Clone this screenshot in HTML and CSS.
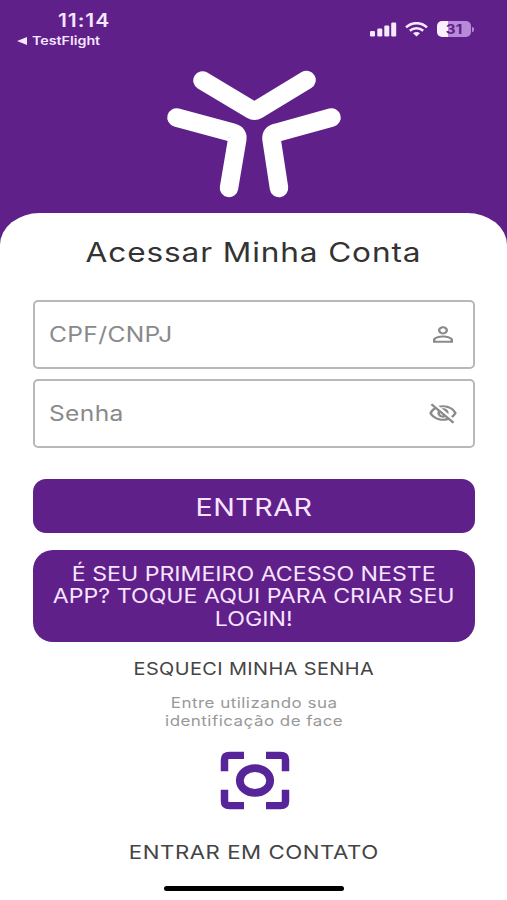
FILE: index.html
```html
<!DOCTYPE html>
<html lang="pt-BR">
<head>
    <meta charset="UTF-8">
    <meta name="viewport" content="width=device-width, initial-scale=1.0">
    <title>Acessar Minha Conta</title>
    <link rel="stylesheet" href="styles.css">
</head>
<body>
    <header class="header">
        <div class="status-bar">
            <div class="status-left">
                <div class="time"><span class="wide">11:14</span></div>
                <div class="back">
                    <svg width="10" height="8" viewBox="0 0 10 8"><path d="M0 4 10 0v8z" fill="#f6e6ff"/></svg>
                    <span class="wide">TestFlight</span>
                </div>
            </div>
            <div class="status-right">
                <svg class="signal" width="27" height="15" viewBox="0 0 27 15" fill="#f6e9ff">
                    <rect x="0" y="9" width="5" height="5.500" rx="1.200"/>
                    <rect x="7.300" y="6.500" width="5" height="8" rx="1.200"/>
                    <rect x="14.300" y="3.500" width="5" height="11" rx="1.200"/>
                    <rect x="21.200" y="0.500" width="5" height="14" rx="1.200"/>
                </svg>
                <svg class="wifi" width="23" height="15" viewBox="0 0 23 15" fill="none" stroke="#f6e9ff" stroke-width="2.500">
                    <path d="M1 5.300C7-.2 16-.2 22 5.300"/>
                    <path d="M4.800 8.800c4-3.500 9.400-3.500 13.400 0"/>
                    <path d="M8 11.200c2-1.600 5-1.600 7 0L11.500 14.500z" fill="#f6e9ff" stroke="none"/>
                </svg>
                <div class="battery"><span class="wide">31</span></div>
                <div class="battery-tip"></div>
            </div>
        </div>
        <svg class="logo" width="210" height="150" viewBox="0 0 210 150" fill="none" stroke="#fff" stroke-width="18.500" stroke-linecap="round" stroke-linejoin="round">
            <path d="M52.500 20.500 101.500 49.800Q104.500 51.600 107.500 49.800L156.500 20"/>
            <path d="M26.500 57.500 83 72.800Q88 74 87.300 79L79 128"/>
            <path d="M181.500 57.500 126 72.800Q121 74 121.500 79L129 128"/>
        </svg>
    </header>

    <main class="sheet">
        <h1 class="title"><span class="wide">Acessar Minha Conta</span></h1>

        <div class="field">
            <span class="wide">CPF/CNPJ</span>
            <svg width="30" height="25" viewBox="0 0 24 24" preserveAspectRatio="none" fill="#8a8a8a">
                <path d="M12 5.900c1.160 0 2.100.94 2.100 2.100s-.94 2.100-2.100 2.100S9.900 9.160 9.900 8s.94-2.100 2.100-2.100m0 9c2.970 0 6.100 1.460 6.100 2.100v1.100H5.900V17c0-.64 3.130-2.100 6.100-2.100M12 4C9.790 4 8 5.790 8 8s1.790 4 4 4 4-1.790 4-4-1.790-4-4-4zm0 9c-2.670 0-8 1.340-8 4v3h16v-3c0-2.660-5.330-4-8-4z"/>
            </svg>
        </div>
        <div class="field">
            <span class="wide">Senha</span>
            <svg width="30" height="25" viewBox="0 0 24 24" preserveAspectRatio="none" fill="#8a8a8a">
                <path d="M12 6c3.790 0 7.170 2.130 8.820 5.500-.59 1.220-1.420 2.270-2.410 3.120l1.410 1.410c1.390-1.230 2.490-2.770 3.180-4.530C21.270 7.110 17 4 12 4c-1.270 0-2.490.2-3.640.57l1.650 1.650C10.660 6.090 11.320 6 12 6zm-1.070 1.140L13 9.210c.57.25 1.030.71 1.280 1.280l2.070 2.070c.08-.34.14-.7.14-1.070C16.500 9.010 14.480 7 12 7c-.37 0-.72.05-1.070.14zM2.010 3.870l2.680 2.680C3.060 7.830 1.770 9.530 1 11.500 2.730 15.890 7 19 12 19c1.520 0 2.980-.29 4.320-.82l3.420 3.420 1.410-1.410L3.420 2.450 2.010 3.870zm7.500 7.500 2.610 2.610c-.04.01-.08.02-.12.02-1.380 0-2.500-1.120-2.500-2.500 0-.05.01-.08.01-.13zm-3.400-3.400 1.750 1.750c-.23.55-.36 1.150-.36 1.780 0 2.480 2.020 4.500 4.500 4.500.63 0 1.230-.13 1.770-.36l.98.98c-.88.24-1.800.38-2.750.38-3.790 0-7.170-2.130-8.820-5.500.7-1.430 1.720-2.610 2.930-3.530z"/>
            </svg>
        </div>

        <button class="button enter"><span class="wide">ENTRAR</span></button>
        <button class="button first-access">
            <span class="wide">É SEU PRIMEIRO ACESSO NESTE<br>APP? TOQUE AQUI PARA CRIAR SEU<br>LOGIN!</span>
        </button>

        <a class="forgot"><span class="wide">ESQUECI MINHA SENHA</span></a>
        <p class="face-text"><span class="wide">Entre utilizando sua<br>identificação de face</span></p>
        <svg class="face-icon" width="70" height="59" viewBox="0 0 70 60" preserveAspectRatio="none" fill="none" stroke="#58249a" stroke-width="7.500">
            <path d="M4.500 20.500V9Q4.500 4.500 9.500 4.500H24" />
            <path d="M46 4.500H60.500Q65.500 4.500 65.500 9V20.500"/>
            <path d="M65.500 39.500V51Q65.500 55.500 60.500 55.500H46"/>
            <path d="M24 55.500H9.500Q4.500 55.500 4.500 51V39.500"/>
            <ellipse cx="35" cy="30" rx="15.200" ry="12.600" stroke-width="7.800"/>
        </svg>
        <a class="contact"><span class="wide">ENTRAR EM CONTATO</span></a>
        <div class="home-indicator"></div>
    </main>
</body>
</html>
```
FILE: styles.css
```css
* {
    box-sizing: border-box;
}

body {
    margin: 0;
    height: 900px;
    background: #5f208a;
    font-family: Inter, "Liberation Sans", sans-serif;
    display: flex;
    flex-direction: column;
    overflow: hidden;
}

/* extended letterforms */
.wide {
    display: inline-block;
    white-space: nowrap;
    transform: scaleX(1.17);
}

.header {
    flex-shrink: 0;
    height: 213px;
}

.status-bar {
    display: flex;
    justify-content: space-between;
    height: 60px;
    padding: 10px 33px 0 17px;
    color: #f6e6ff;
}

.time {
    font-size: 18px;
    font-weight: 600;
    line-height: 21px;
    letter-spacing: 0.8px;
    padding-left: 41px;
}

.time .wide,
.back .wide,
.field .wide {
    transform-origin: left center;
}

.back {
    display: flex;
    align-items: center;
    gap: 5px;
    font-size: 12.2px;
    font-weight: 600;
    line-height: 19px;
}

.status-right {
    display: flex;
    align-items: center;
    height: 38px;
}

.wifi {
    margin: 0 9px 0 8px;
}

.battery {
    width: 34px;
    height: 16px;
    border-radius: 5px;
    background: linear-gradient(90deg, #faf0ff 31%, #b98ad8 31%);
    color: #5f208a;
    font-size: 13px;
    font-weight: 700;
    line-height: 16px;
    text-align: center;
}

.battery-tip {
    width: 2px;
    height: 5px;
    margin-left: 1px;
    border-radius: 0 2px 2px 0;
    background: #b98ad8;
}

.logo {
    display: block;
    margin-left: 150px;
}

.sheet {
    flex: 1;
    display: flex;
    flex-direction: column;
    align-items: center;
    padding: 20px 32px 0 33px;
    background: #fff;
    border-radius: 40px 40px 0 0 / 32px 32px 0 0;
}

.title {
    margin: 0 0 27px;
    font-size: 27px;
    font-weight: 400;
    line-height: 40px;
    letter-spacing: 0.75px;
    color: #333;
}

.field {
    display: flex;
    flex-shrink: 0;
    align-items: center;
    justify-content: space-between;
    align-self: stretch;
    height: 69px;
    margin-bottom: 10px;
    padding: 0 15px 1px 14px;
    border: 2px solid #b8b8b8;
    border-radius: 5px;
    color: #8a8a8a;
    font-size: 21px;
    letter-spacing: 0.3px;
}

.button {
    flex-shrink: 0;
    align-self: stretch;
    padding: 1px 0 0;
    border: none;
    background: #5f208a;
    color: #f8e4ff;
    font-family: inherit;
}

.enter {
    height: 54px;
    margin: 21px 0 17px;
    border-radius: 13px;
    font-size: 24.5px;
    letter-spacing: 0.4px;
}

.first-access {
    height: 92px;
    border-radius: 20px;
    font-size: 19.8px;
    line-height: 22.4px;
}

.forgot {
    margin-top: 16px;
    font-size: 17px;
    line-height: 22px;
    letter-spacing: 0.35px;
    color: #444;
}

.face-text {
    margin: 14px 0 21px;
    font-size: 14.5px;
    line-height: 18px;
    letter-spacing: 0.4px;
    text-align: center;
    color: #999;
}

.face-icon {
    flex-shrink: 0;
    margin-left: 1px;
}

.contact {
    margin-top: 31px;
    font-size: 19px;
    line-height: 24px;
    letter-spacing: 0.45px;
    color: #444;
}

.home-indicator {
    flex-shrink: 0;
    width: 180px;
    height: 5px;
    margin-top: 21px;
    border-radius: 3px;
    background: #000;
}
```
